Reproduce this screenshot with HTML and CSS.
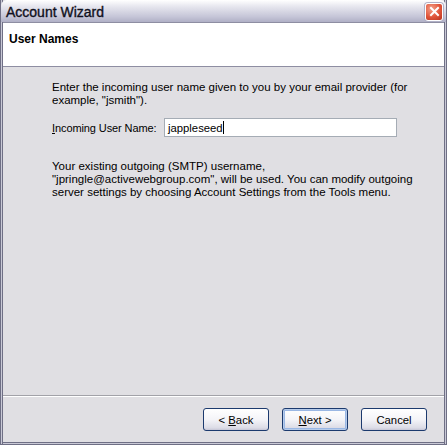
FILE: index.html
```html
<!DOCTYPE html>
<html lang="en">
<head>
  <meta charset="UTF-8" />
  <title>Account Wizard</title>
  <link rel="stylesheet" href="styles.css">
</head>
<body>
  <div class="window">
    <!-- title bar -->
    <div class="titlebar">
      <span class="title">Account Wizard</span>
      <span class="close">
        <svg width="11" height="11" viewBox="0 0 11 11">
          <path d="M2 2 L9 9 M9 2 L2 9" stroke="#fff" stroke-width="2" stroke-linecap="square"/>
        </svg>
      </span>
    </div>

    <!-- page header -->
    <div class="page-header">User Names</div>

    <!-- content -->
    <div class="page-body">
      <p class="desc">Enter the incoming user name given to you by your email provider (for example, "jsmith").</p>
      <div class="field">
        <label class="label"><u>I</u>ncoming User Name:</label>
        <div class="input">jappleseed<span class="caret"></span></div>
      </div>
      <p class="desc note">Your existing outgoing (SMTP) username, "jpringle@activewebgroup.com", will be used. You can modify outgoing server settings by choosing Account Settings from the Tools menu.</p>
    </div>

    <!-- buttons -->
    <div class="buttons">
      <button class="btn">&lt; <u>B</u>ack</button>
      <button class="btn default"><u>N</u>ext &gt;</button>
      <button class="btn">Cancel</button>
    </div>
  </div>
</body>
</html>
```

FILE: styles.css
```css
html, body {
  margin: 0;
  padding: 0;
  background: #dfdfe3;
}

.window {
  width: 447px;
  height: 445px;
  box-sizing: border-box;
  display: flex;
  flex-direction: column;
  background: #e0dfe3;
  border: 1px solid #6f6f85;
  border-top: none;
  box-shadow: inset 1px 0 0 #c9c9d6, inset 2px 0 0 #6f6f85, inset -1px 0 0 #c9c9d6, inset -2px 0 0 #6f6f85, inset 0 -1px 0 #c9c9d6, inset 0 -2px 0 #6f6f85;
  font-family: "Liberation Sans", Arial, sans-serif;
  font-size: 11px;
  color: #000;
}

/* title bar */
.titlebar {
  height: 22px;
  display: flex;
  align-items: center;
  justify-content: space-between;
  padding: 0 3px 0 5px;
  background: linear-gradient(#ffffff 0%, #e6e6ee 30%, #c6c6d8 75%, #b0b0c6 100%);
  border-radius: 6px 6px 0 0;
  box-sizing: border-box;
}
.title {
  font-family: "Liberation Sans", sans-serif;
  font-size: 14px;
  color: #101020;
  padding-top: 1px;
  -webkit-text-stroke: 0.35px #101020;
}
.close {
  width: 18px;
  height: 18px;
  border-radius: 3px;
  border: 1px solid #fff;
  box-shadow: 0 0 0 1px #b0b0c6;
  background: radial-gradient(circle at 35% 30%, #f4a08a, #e0553a 55%, #b8321f);
  display: flex;
  align-items: center;
  justify-content: center;
  box-sizing: border-box;
  margin-top: 1px;
}

.page-header {
  height: 45px;
  background: #fff;
  border-top: 1px solid #8e8ea2;
  border-bottom: 1px solid #8e8ea2;
  margin: 0 2px;
  padding: 9px 6px 0;
  box-sizing: border-box;
  font-weight: bold;
  font-size: 12px;
}

.page-body {
  flex: 1;
  padding: 14px 0 0 51px;
}
.desc {
  margin: 0;
  width: 368px;
  font-size: 11.5px;
  line-height: 13px;
}
.field {
  display: flex;
  align-items: center;
  margin: 11px 0 0;
  width: 345px;
}
.label {
  width: 112px;
  white-space: nowrap;
  letter-spacing: -0.1px;
}
.label u { text-decoration: underline; }
.input {
  flex: 1;
  height: 19px;
  box-sizing: border-box;
  background: #fff;
  border: 1px solid #a5acb5;
  padding: 2px 3px;
  display: flex;
  align-items: center;
  font-size: 11.3px;
}
.caret {
  display: inline-block;
  width: 1px;
  height: 13px;
  background: #000;
}
.note {
  margin-top: 23px;
}

.buttons {
  height: 47px;
  margin: 0 2px 2px;
  border-top: 1px solid #a2a2a8;
  box-shadow: inset 0 1px 0 #fff;
  display: flex;
  justify-content: flex-end;
  align-items: flex-start;
  gap: 13px;
  padding: 12px 17px 0 0;
  box-sizing: border-box;
}
.btn {
  width: 66px;
  height: 23px;
  font-family: "Liberation Sans", Arial, sans-serif;
  font-size: 11.3px;
  color: #000;
  border: 1px solid #1c3a6e;
  border-radius: 3px;
  background: linear-gradient(#ffffff 0%, #f4f4f8 50%, #dcdce6 90%, #c6c6d6 100%);
  padding: 0;
}
.btn.default {
  box-shadow: inset 0 0 0 1px #b6cbea, inset 0 0 0 2px #9ab7e4;
}
```
